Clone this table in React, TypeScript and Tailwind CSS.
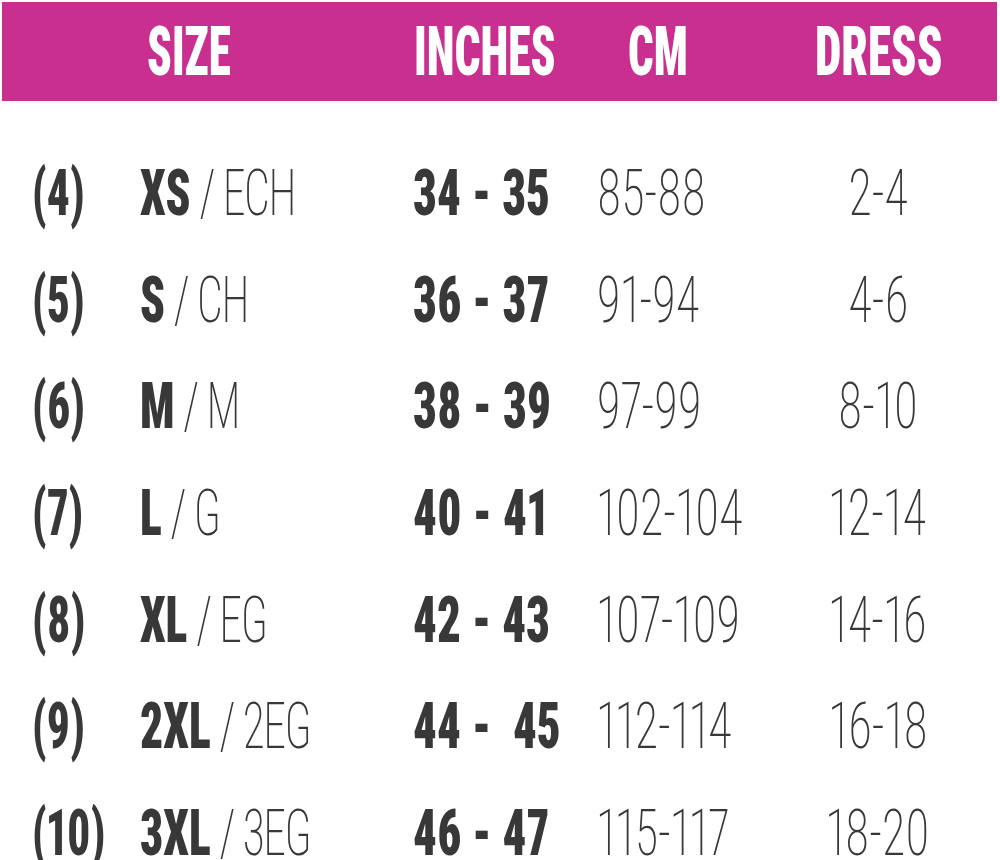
import React from "react";

const rows: [string, string, string, string, string, string][] = [
  ["(4)", "XS", "ECH", "34 - 35", "85-88", "2-4"],
  ["(5)", "S", "CH", "36 - 37", "91-94", "4-6"],
  ["(6)", "M", "M", "38 - 39", "97-99", "8-10"],
  ["(7)", "L", "G", "40 - 41", "102-104", "12-14"],
  ["(8)", "XL", "EG", "42 - 43", "107-109", "14-16"],
  ["(9)", "2XL", "2EG", "44 -  45", "112-114", "16-18"],
  ["(10)", "3XL", "3EG", "46 - 47", "115-117", "18-20"],
];

export default function App() {
  return (
    <div className="w-[1000px] h-[860px] overflow-hidden bg-white font-['Roboto',sans-serif] font-stretch-condensed proportional-nums">
      <div className="ml-[2px] mt-[2px] w-[995px] h-[99px] bg-[#c92f8f] flex items-center text-white text-[69px] leading-[56px] font-black">
        <div className="w-[412px] pl-[145px]">
          <span className="inline-block origin-left scale-x-[0.655] whitespace-pre">SIZE</span>
        </div>
        <div className="w-[214px]">
          <span className="inline-block origin-left scale-x-[0.66] whitespace-pre">INCHES</span>
        </div>
        <div className="w-[151px]">
          <span className="inline-block origin-left scale-x-[0.65] whitespace-pre">CM</span>
        </div>
        <div className="w-[200px] text-center">
          <span className="inline-block origin-center scale-x-[0.68] whitespace-pre">DRESS</span>
        </div>
      </div>
      <div className="mt-[38.67px] text-[#383838] text-[65px] leading-[50px]">
        {rows.map((r) => (
          <div key={r[0]} className="h-[106.67px] flex items-center">
            <div className="w-[140px] pl-[32px] font-extrabold">
              <span className="inline-block origin-left scale-x-[0.7] whitespace-pre">{r[0]}</span>
            </div>
            <div className="w-[273px]">
              <span className="inline-block origin-left scale-x-[0.7] whitespace-pre">
                <span className="font-black">{r[1]}</span>
                <span className="font-extralight tracking-[-2px]"> / {r[2]}</span>
              </span>
            </div>
            <div className="w-[184px] font-black">
              <span className="inline-block origin-left scale-x-[0.72] whitespace-pre">{r[3]}</span>
            </div>
            <div className="w-[181px] font-extralight">
              <span className="inline-block origin-left scale-x-[0.74] whitespace-pre">{r[4]}</span>
            </div>
            <div className="w-[200px] text-center font-extralight">
              <span className="inline-block origin-center scale-x-[0.74] whitespace-pre">{r[5]}</span>
            </div>
          </div>
        ))}
      </div>
    </div>
  );
}
